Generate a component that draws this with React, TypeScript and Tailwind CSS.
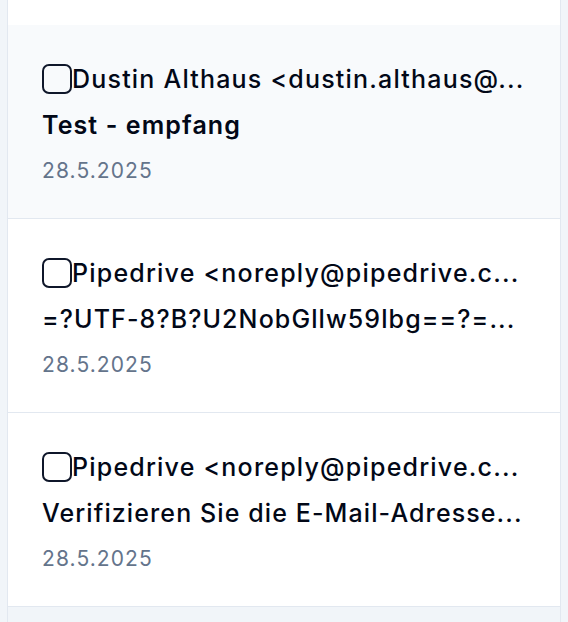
import React from "react";

type Mail = { from: string; subject: string; date: string; active?: boolean; bold?: boolean };

const mails: Mail[] = [
  { from: "Dustin Althaus <dustin.althaus@...", subject: "Test - empfang", date: "28.5.2025", active: true, bold: true },
  { from: "Pipedrive <noreply@pipedrive.c...", subject: "=?UTF-8?B?U2NobGllw59lbg==?=...", date: "28.5.2025" },
  { from: "Pipedrive <noreply@pipedrive.c...", subject: "Verifizieren Sie die E-Mail-Adresse...", date: "28.5.2025" },
];

function Row({ m }: { m: Mail }) {
  return (
    <div
      className={`h-[194px] shrink-0 border-b border-[#e2e8f0] pl-[34px] pr-[30px] pt-[36px] flex flex-col ${
        m.active ? "bg-[#f8fafc]" : "bg-white"
      }`}
    >
      <div className="flex items-center h-[36px]">
        <span className="w-[30px] h-[30px] shrink-0 rounded-[7px] border-2 border-[#0f172a] bg-transparent" />
        <span className="whitespace-nowrap overflow-hidden text-[25px] leading-[36px] tracking-[1.2px] font-medium text-[#020817]">
          {m.from}
        </span>
      </div>
      <div
        className={`mt-[10px] whitespace-nowrap overflow-hidden text-[25px] leading-[36px] tracking-[1.1px] text-[#020817] ${
          m.bold ? "font-semibold" : "font-medium"
        }`}
      >
        {m.subject}
      </div>
      <div className="mt-[13px] text-[21px] leading-[30px] tracking-[1.1px] text-[#64748b]">{m.date}</div>
    </div>
  );
}

export default function App() {
  return (
    <div
      className="w-[568px] h-[622px] overflow-hidden bg-[#f1f5f9]"
      style={{ fontFamily: "Inter, 'Noto Sans', sans-serif" }}
    >
      <div className="ml-[7px] w-[554px] h-full border-x border-[#e2e8f0] bg-[#f1f5f9] flex flex-col">
        <div className="h-[25px] bg-white shrink-0" />
        {mails.map((m, i) => (
          <Row key={i} m={m} />
        ))}
      </div>
    </div>
  );
}
